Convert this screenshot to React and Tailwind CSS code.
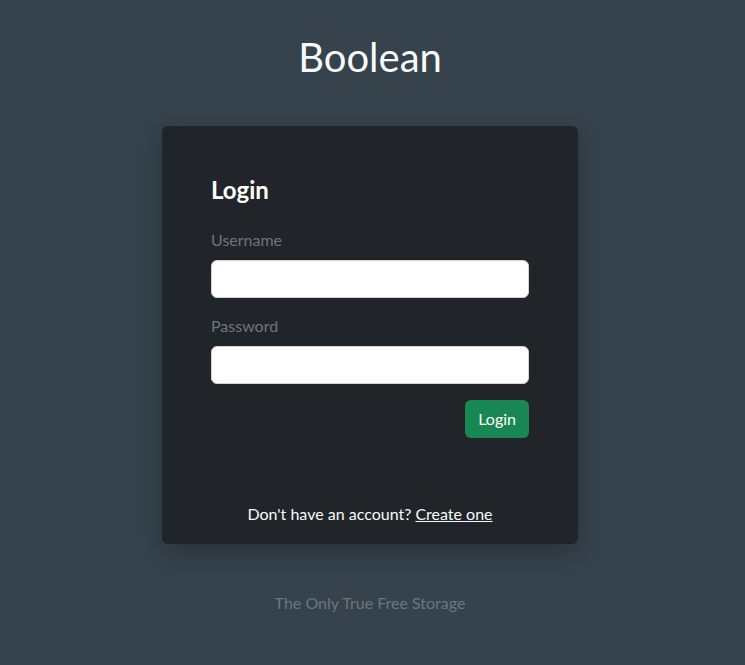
import React from 'react';

const App = () => {
    return (
        <main
            className="min-h-[665px] w-full bg-[#36434c] flex flex-col items-center pr-[5px] text-[#dee2e6]"
            style={{ fontFamily: 'Lato, "Open Sans", sans-serif' }}
        >
            <h1 className="mt-[30px] text-[40px] leading-[54px] font-normal text-[#f8f9fa]">Boolean</h1>

            <div className="mt-[42px] w-[416px] rounded-md bg-[#212529] shadow-[0_8px_24px_rgba(0,0,0,0.25)] px-[49px] pt-[49px] pb-[18px]">
                <h2 className="text-2xl leading-[30px] font-bold text-white">Login</h2>

                <form className="mt-[23px]" onSubmit={(e) => e.preventDefault()}>
                    <label className="block text-base leading-6 text-[#6c757d] mb-2">Username</label>
                    <input
                        type="text"
                        className="block w-full h-[38px] rounded-md border border-[#ced4da] bg-white px-3 text-[#212529] outline-none"
                    />
                    <label className="block text-base leading-6 text-[#6c757d] mt-4 mb-2">Password</label>
                    <input
                        type="password"
                        className="block w-full h-[38px] rounded-md border border-[#ced4da] bg-white px-3 text-[#212529] outline-none"
                    />
                    <div className="flex justify-end mt-4">
                        <button
                            type="submit"
                            className="h-[38px] px-[13px] rounded-md bg-[#198754] text-white text-base"
                        >
                            Login
                        </button>
                    </div>
                </form>

                <p className="mt-[64px] text-center text-base leading-6 text-[#f8f9fa]">
                    Don't have an account? <a href="#" className="underline text-[#f8f9fa]">Create one</a>
                </p>
            </div>

            <p className="mt-[47px] text-base leading-6 text-[#6c757d]">The Only True Free Storage</p>
        </main>
    );
};

export default App;
